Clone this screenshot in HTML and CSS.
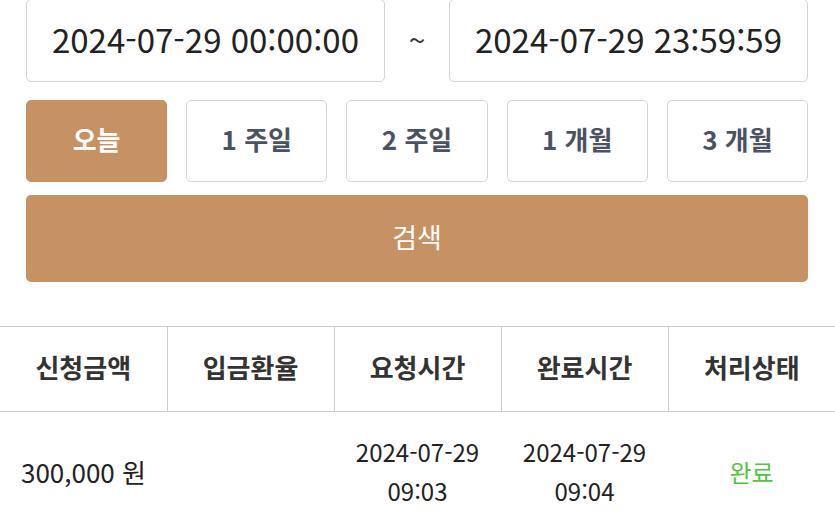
FILE: index.html
```html
<!DOCTYPE html>
<html lang="ko">
<head>
<meta charset="utf-8">
<link rel="stylesheet" href="styles.css">
</head>
<body>
<div class="page">
  <div class="filter">
    <div class="range">
      <div class="date-input">2024-07-29 00:00:00</div>
      <div class="tilde">~</div>
      <div class="date-input">2024-07-29 23:59:59</div>
    </div>
    <div class="periods">
      <button class="period active">오늘</button>
      <button class="period">1 주일</button>
      <button class="period">2 주일</button>
      <button class="period">1 개월</button>
      <button class="period">3 개월</button>
    </div>
    <button class="search">검색</button>
  </div>
  <table class="list">
    <thead>
      <tr>
        <th>신청금액</th>
        <th>입금환율</th>
        <th>요청시간</th>
        <th>완료시간</th>
        <th>처리상태</th>
      </tr>
    </thead>
    <tbody>
      <tr>
        <td class="amount">300,000 원</td>
        <td></td>
        <td>2024-07-29<br>09:03</td>
        <td>2024-07-29<br>09:04</td>
        <td class="done">완료</td>
      </tr>
    </tbody>
  </table>
</div>
</body>
</html>
```
FILE: styles.css
```css
* { box-sizing: border-box; }
html, body {
  margin: 0;
  padding: 0;
  background: #ffffff;
  font-family: "Noto Sans CJK KR", "Noto Sans", sans-serif;
  color: #222;
}
.page {
  width: 835px;
  margin-top: -1px;
}
.filter {
  padding: 0 27px 0 26px;
  display: flex;
  flex-direction: column;
}
.range {
  display: flex;
  align-items: center;
}
.date-input {
  flex: 1;
  height: 83px;
  border: 1px solid #d4d4d4;
  border-radius: 5px;
  display: flex;
  align-items: center;
  justify-content: center;
  font-size: 33px;
  color: #222;
  padding-bottom: 3px;
}
.tilde {
  width: 64px;
  text-align: center;
  font-size: 30px;
  color: #333;
  padding-bottom: 4px;
}
.periods {
  display: flex;
  gap: 19px;
  margin-top: 18px;
}
.period {
  flex: 1;
  height: 82px;
  border: 1px solid #d4d4d4;
  border-radius: 5px;
  background: #fff;
  font-family: inherit;
  font-size: 26px;
  font-weight: 700;
  color: #4b5263;
  padding: 0 0 5px;
}
.period.active {
  background: #c69263;
  border-color: #c69263;
  color: #fff;
}
.search {
  margin-top: 13px;
  height: 87px;
  border: none;
  border-radius: 5px;
  background: #c69263;
  color: #fff;
  font-family: inherit;
  font-size: 27px;
  font-weight: 400;
  padding: 0 0 5px;
}
.list {
  margin-top: 44px;
  width: 835px;
  border-collapse: collapse;
  table-layout: fixed;
}
.list th {
  height: 85px;
  border-top: 1px solid #cccccc;
  border-bottom: 1px solid #cccccc;
  border-left: 1px solid #cccccc;
  font-size: 26px;
  font-weight: 700;
  color: #333;
  padding: 0 0 5px;
}
.list th:first-child { border-left: none; }
.list td {
  height: 120px;
  text-align: center;
  font-size: 24px;
  line-height: 39px;
  color: #222;
  padding: 0 0 1px;
}
.list td.amount { font-size: 26px; }
.list td.done {
  color: #4fc640;
  font-size: 24px;
}
```
